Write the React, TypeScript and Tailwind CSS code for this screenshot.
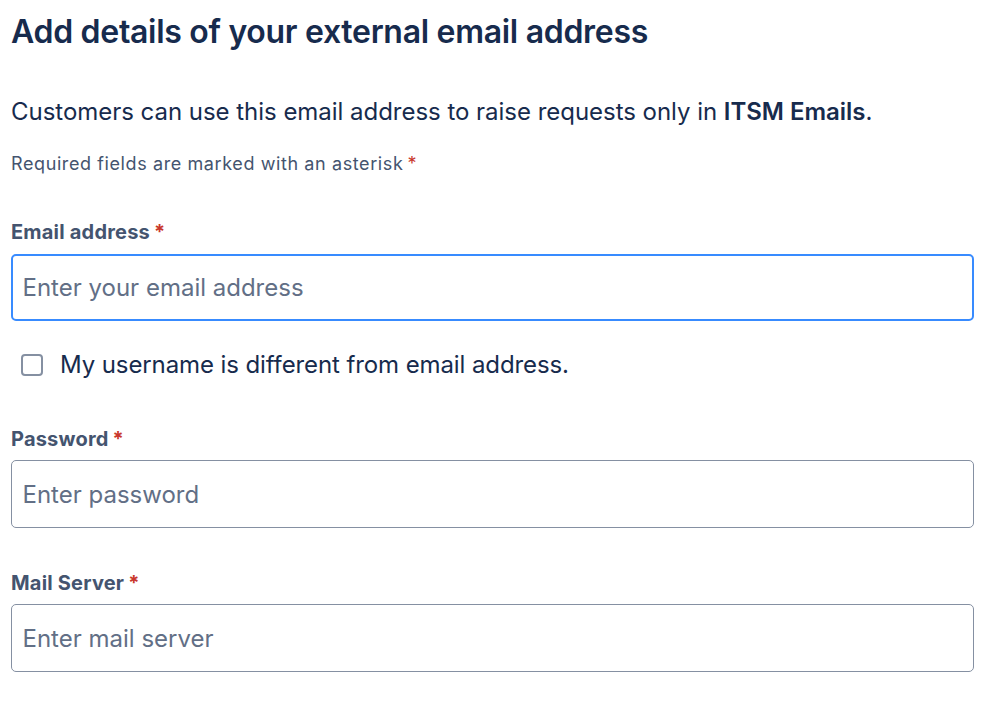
import { useState } from "react"

const FONT = { fontFamily: "Inter, 'Noto Sans', sans-serif" }

function Required() {
  return <span className="ml-[4px] text-[#C9372C]">*</span>
}

function Field({
  label,
  placeholder,
  type = "text",
  focused = false,
}: {
  label: string
  placeholder: string
  type?: string
  focused?: boolean
}) {
  return (
    <div className="flex flex-col">
      <label className="text-[20px] font-bold text-[#44546F] leading-[24px] tracking-[0.2px]">
        {label}
        <Required />
      </label>
      <input
        type={type}
        placeholder={placeholder}
        className={
          focused
            ? "mt-[10px] h-[67px] w-full rounded-[5px] border-[2.5px] border-[#388BFF] px-[9.5px] text-[24px] text-[#172B4D] placeholder:text-[#626F86] outline-none"
            : "mt-[9px] h-[68px] w-full rounded-[5px] border-[1.5px] border-[#8590A2] px-[10.5px] text-[24px] text-[#172B4D] placeholder:text-[#626F86] outline-none"
        }
      />
    </div>
  )
}

export default function App() {
  const [checked, setChecked] = useState(false)

  return (
    <div className="min-h-screen bg-white pl-[11px] pr-[25px] pt-[12px]" style={FONT}>
      <h1 className="text-[32px] font-semibold leading-[40px] text-[#172B4D] tracking-[-0.3px]">
        Add details of your external email address
      </h1>

      <p className="mt-[45px] text-[24px] leading-[30px] text-[#172B4D] tracking-[-0.03px]">
        Customers can use this email address to raise requests only in{" "}
        <span className="font-semibold">ITSM Emails</span>.
      </p>

      <p className="mt-[26px] text-[18px] leading-[22px] text-[#44546F] tracking-[0.6px]">
        Required fields are marked with an asterisk
        <Required />
      </p>

      <div className="mt-[45px]">
        <Field label="Email address" placeholder="Enter your email address" type="email" focused />
      </div>

      <label className="mt-[29px] ml-[10px] flex items-center gap-[17px] cursor-pointer">
        <input
          type="checkbox"
          checked={checked}
          onChange={(e) => setChecked(e.target.checked)}
          className="h-[22px] w-[22px] appearance-none rounded-[4px] border-[2px] border-[#8590A2] bg-white"
        />
        <span className="text-[24px] leading-[30px] text-[#172B4D] tracking-[-0.1px]">
          My username is different from email address.
        </span>
      </label>

      <div className="mt-[47px]">
        <Field label="Password" placeholder="Enter password" type="password" />
      </div>

      <div className="mt-[43px]">
        <Field label="Mail Server" placeholder="Enter mail server" />
      </div>
    </div>
  )
}
